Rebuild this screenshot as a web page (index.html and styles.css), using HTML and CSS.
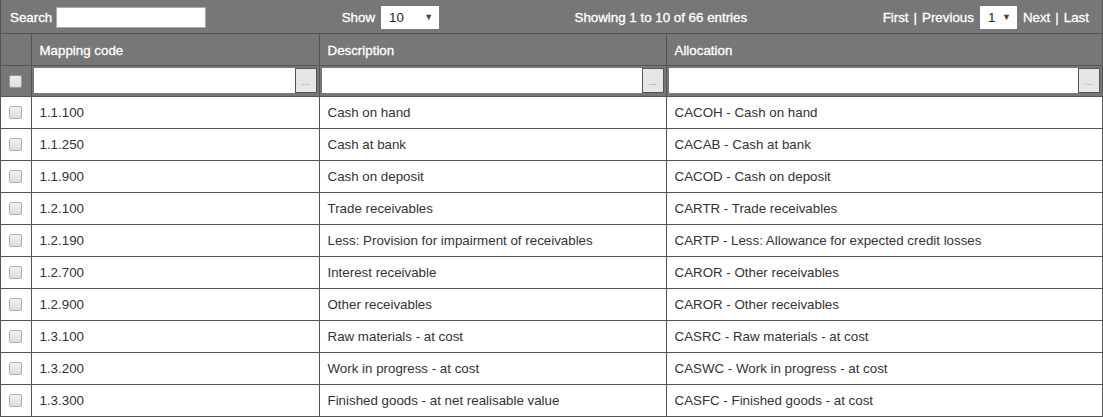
FILE: index.html
```html
<!DOCTYPE html>
<html>
<head>
  <meta charset="UTF-8">
  <title>Mapping</title>
  <link rel="stylesheet" href="styles.css">
</head>
<body>
  <div class="grid">
    <div class="toolbar">
      <div class="grp"><span>Search</span><span class="search"></span></div>
      <div class="grp"><span>Show</span><span class="sel show">10<i>&#9660;</i></span></div>
      <div class="grp">Showing 1 to 10 of 66 entries</div>
      <div class="grp pager">First <b>|</b> Previous <span class="sel page">1<i>&#9660;</i></span> Next <b>|</b> Last</div>
    </div>
    <table>
      <colgroup>
        <col class="c0"><col class="c1"><col class="c2"><col>
      </colgroup>
      <thead>
        <tr class="head">
          <th></th><th>Mapping code</th><th>Description</th><th>Allocation</th>
        </tr>
        <tr class="filter">
          <th><span class="chk"></span></th>
          <th><div class="flt"><span class="box"></span><span class="btn">...</span></div></th>
          <th><div class="flt"><span class="box"></span><span class="btn">...</span></div></th>
          <th><div class="flt"><span class="box"></span><span class="btn">...</span></div></th>
        </tr>
      </thead>
      <tbody>
        <tr><td><span class="chk"></span></td><td>1.1.100</td><td>Cash on hand</td><td>CACOH - Cash on hand</td></tr>
        <tr><td><span class="chk"></span></td><td>1.1.250</td><td>Cash at bank</td><td>CACAB - Cash at bank</td></tr>
        <tr><td><span class="chk"></span></td><td>1.1.900</td><td>Cash on deposit</td><td>CACOD - Cash on deposit</td></tr>
        <tr><td><span class="chk"></span></td><td>1.2.100</td><td>Trade receivables</td><td>CARTR - Trade receivables</td></tr>
        <tr><td><span class="chk"></span></td><td>1.2.190</td><td>Less: Provision for impairment of receivables</td><td>CARTP - Less: Allowance for expected credit losses</td></tr>
        <tr><td><span class="chk"></span></td><td>1.2.700</td><td>Interest receivable</td><td>CAROR - Other receivables</td></tr>
        <tr><td><span class="chk"></span></td><td>1.2.900</td><td>Other receivables</td><td>CAROR - Other receivables</td></tr>
        <tr><td><span class="chk"></span></td><td>1.3.100</td><td>Raw materials - at cost</td><td>CASRC - Raw materials - at cost</td></tr>
        <tr><td><span class="chk"></span></td><td>1.3.200</td><td>Work in progress - at cost</td><td>CASWC - Work in progress - at cost</td></tr>
        <tr><td><span class="chk"></span></td><td>1.3.300</td><td>Finished goods - at net realisable value</td><td>CASFC - Finished goods - at cost</td></tr>
      </tbody>
    </table>
  </div>
</body>
</html>
```

FILE: styles.css
```css
* {
  box-sizing: border-box;
}
body {
  margin: 0;
  font-family: "Liberation Sans", Arial, sans-serif;
  font-size: 13.33px;
  color: #333;
  background: #fff;
}

.grid {
  width: 1103px;
  border: 1px solid #555;
  border-top: 0;
}

.toolbar {
  display: flex;
  justify-content: space-between;
  align-items: center;
  height: 34px;
  padding: 1px 13px 0 9px;
  background: #777;
  color: #fff;
  -webkit-text-stroke: 0.3px #fff;
  border-bottom: 1px solid #555;
}
.grp {
  display: flex;
  align-items: center;
  gap: 5px;
}
.pager b {
  font-weight: normal;
}
.search {
  display: block;
  width: 150px;
  height: 21px;
  margin-left: -1px;
  background: #fff;
  border: 1px solid #aaa;
}
.sel {
  display: flex;
  align-items: center;
  justify-content: space-between;
  height: 23px;
  padding: 0 6px 0 8px;
  background: #fff;
  color: #222;
  -webkit-text-stroke: 0;
}
.sel i {
  font-style: normal;
  font-size: 9px;
  color: #444;
}
.show {
  width: 58px;
  margin-left: 1px;
}
.page {
  width: 37px;
  margin: 0 1px;
}

table {
  width: 100%;
  border-collapse: collapse;
  table-layout: fixed;
}
.c0 { width: 30px; }
.c1 { width: 288px; }
.c2 { width: 347px; }

th, td {
  border: 1px solid #555;
  padding: 0 8px;
  text-align: left;
  font-weight: normal;
}
tr:first-child th { border-top: 0; }
th:first-child, td:first-child { border-left: 0; text-align: center; padding: 0; }
th:last-child, td:last-child { border-right: 0; }

.head th {
  height: 31px;
  padding-top: 2px;
  background: #777;
  color: #fff;
  -webkit-text-stroke: 0.3px #fff;
}
.filter th {
  height: 31px;
  background: #777;
  padding: 0 2px;
}
.filter th:first-child { padding: 0; }
.flt {
  display: flex;
  height: 25px;
}
.flt .box {
  flex: 1;
  background: #fff;
}
.flt .btn {
  width: 22px;
  background: #e6e6e6;
  border: 1px solid #555;
  color: #888;
  font-size: 9px;
  text-align: center;
  line-height: 26px;
}

td {
  height: 32px;
  white-space: nowrap;
}

.chk {
  display: inline-block;
  width: 13px;
  height: 13px;
  vertical-align: middle;
  border: 1px solid #b0b0b0;
  border-radius: 2px;
  background: linear-gradient(#f0f0f0, #dcdcdc);
}
.filter .chk {
  border-color: #999;
  background: linear-gradient(#eee, #ddd);
}
```
